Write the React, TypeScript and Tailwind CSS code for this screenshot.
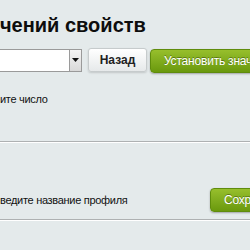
import React from 'react';

const font = { fontFamily: '"Liberation Sans", Arial, sans-serif' };

function GreenButton({ label }: { label: string }) {
  return (
    <button className="h-[24px] shrink-0 pl-[13px] pr-4 rounded-[4px] border border-[#5f8c0c] bg-gradient-to-b from-[#97bf2c] to-[#6a990c] text-white text-[12px] tracking-[-0.2px] leading-none whitespace-nowrap shadow-[0_1px_2px_rgba(0,0,0,0.3)] [text-shadow:0_-1px_0_rgba(0,0,0,0.35)]">
      {label}
    </button>
  );
}

export default function App() {
  return (
    <div className="w-[250px] h-[250px] overflow-hidden bg-[#e4eaeb] text-[#111]" style={font}>
      <h1 className="pt-[14px] text-[20px] leading-[23px] font-bold whitespace-nowrap text-[#0d0d0d]">
        чений свойств
      </h1>

      <div className="mt-[11px] flex items-center h-[24px]">
        <div className="w-[82px] h-[23px] shrink-0 flex bg-white border-y border-r border-[#9a9a9a]">
          <div className="flex-1" />
          <div className="w-[12px] h-full flex items-center justify-center border-l border-[#9a9a9a] bg-gradient-to-b from-[#f4f4f4] to-[#d9d9d9]">
            <svg width="7" height="4" viewBox="0 0 7 4">
              <path d="M0 0h7L3.5 4z" fill="#111" />
            </svg>
          </div>
        </div>
        <button className="ml-[6px] w-[59px] h-[24px] shrink-0 rounded-[3px] border border-[#c6cbcc] bg-gradient-to-b from-white to-[#e6e9ea] text-[12px] font-bold text-[#222] leading-none shadow-[0_1px_2px_rgba(0,0,0,0.15)]">
          Назад
        </button>
        <div className="ml-[3px]">
          <GreenButton label="Установить значение" />
        </div>
      </div>

      <p className="mt-[21px] text-[11px] tracking-[-0.3px] leading-[13px] whitespace-nowrap">ите число</p>

      <div className="mt-[35px] h-[2px] border-t border-[#aeb1b2] bg-white" />

      <div className="mt-[45px] flex items-center h-[24px]">
        <p className="w-[210px] shrink-0 text-[11px] tracking-[-0.3px] leading-[13px] whitespace-nowrap">ведите название профиля</p>
        <GreenButton label="Сохранить" />
      </div>

      <div className="mt-[7px] h-[2px] border-t border-[#aeb1b2] bg-white" />
    </div>
  );
}
